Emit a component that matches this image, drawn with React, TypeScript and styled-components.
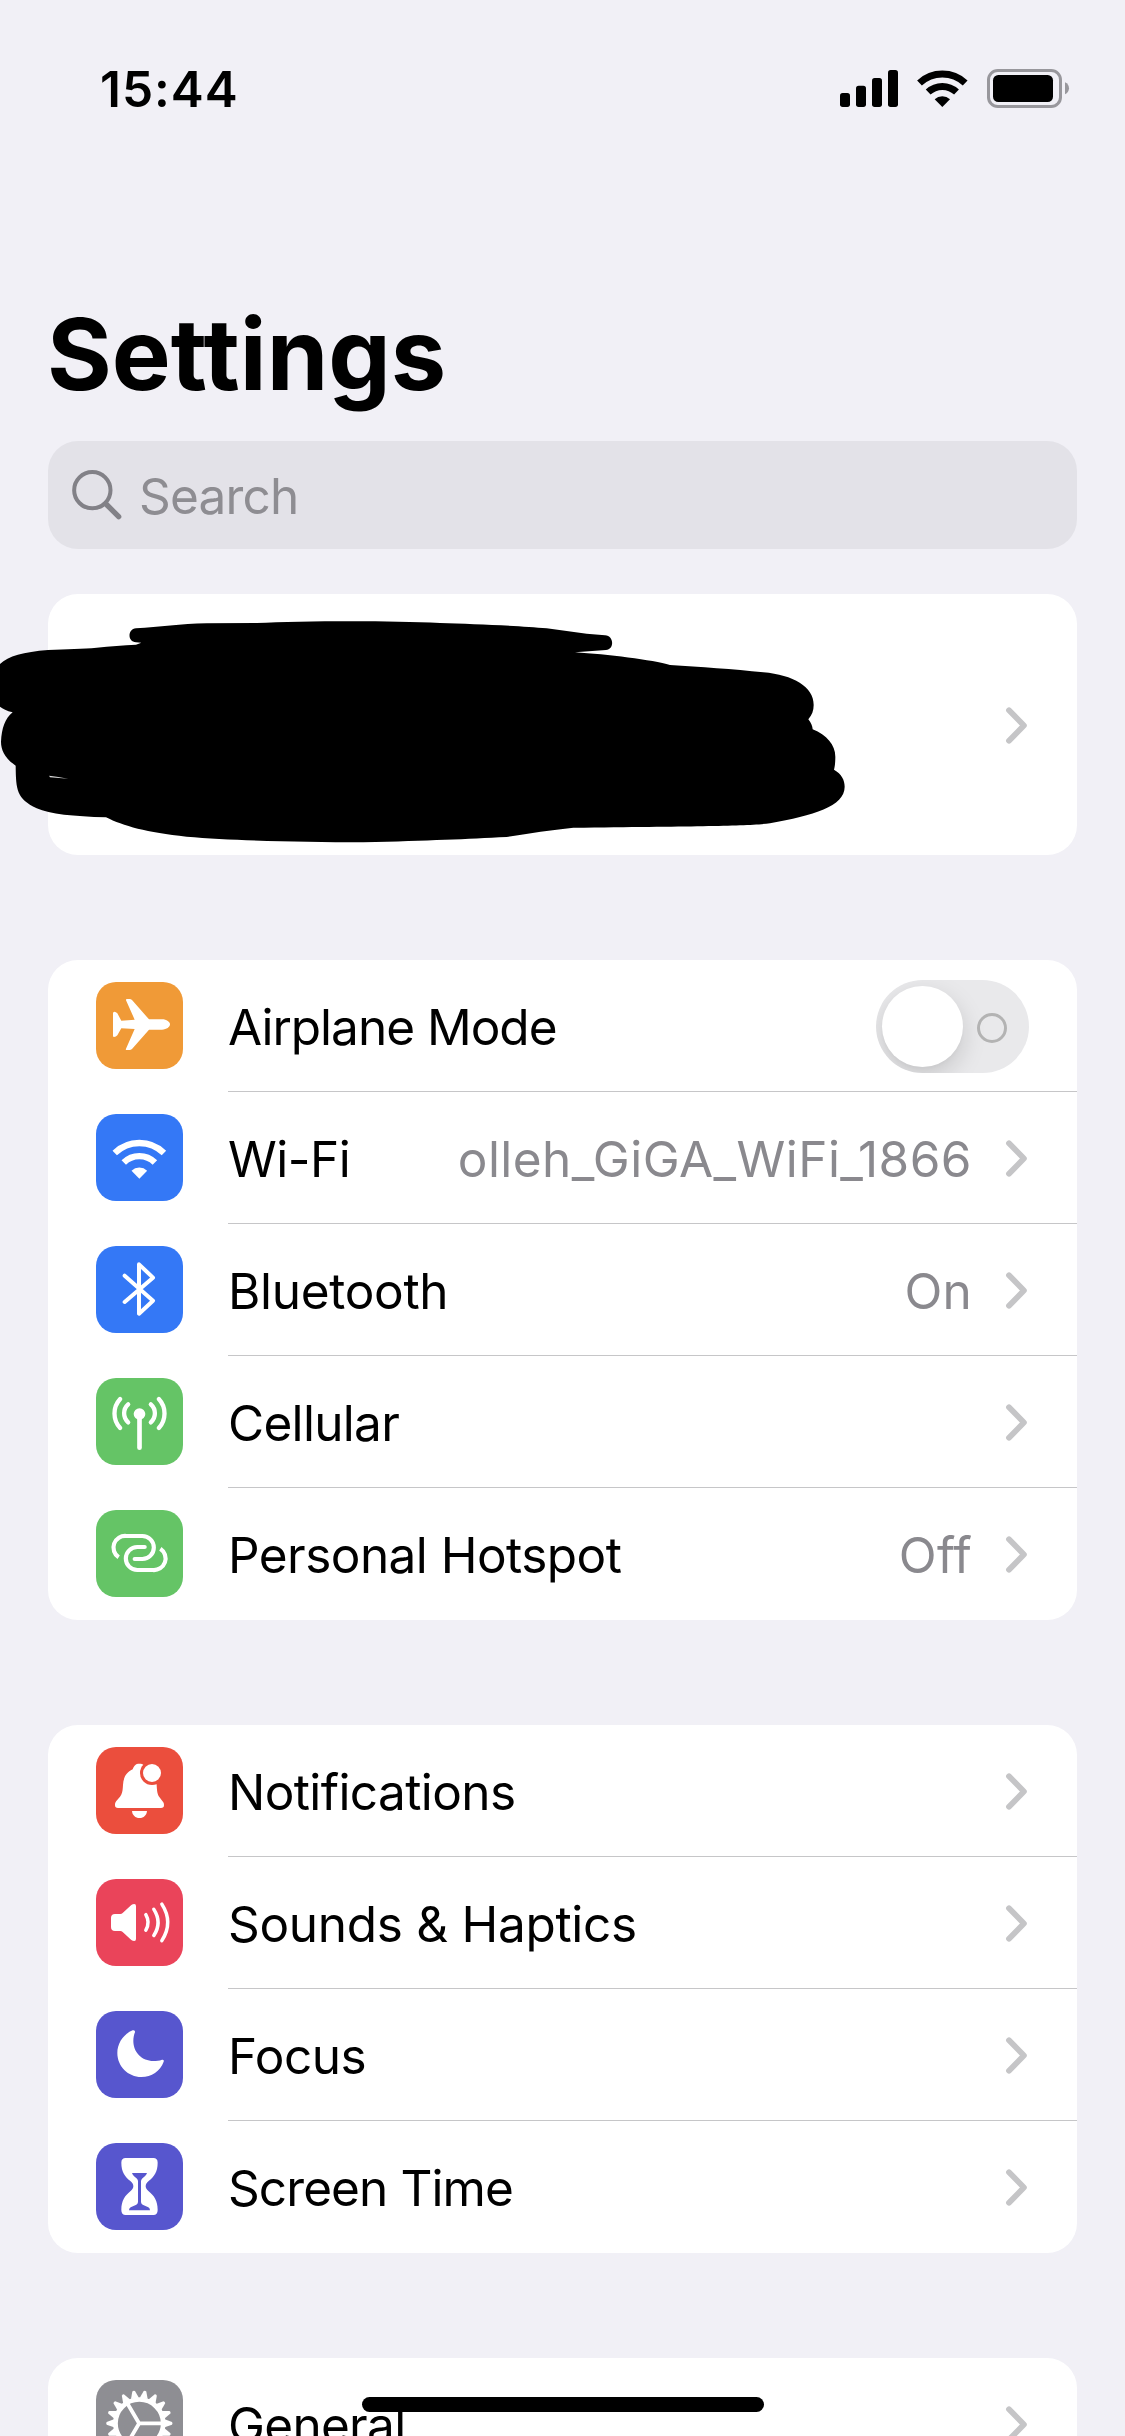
import React from "react";
import styled, { createGlobalStyle } from "styled-components";

const GlobalStyle = createGlobalStyle`
  * { box-sizing: border-box; }
  body { margin: 0; background: #f1f0f6; }
`;

const Screen = styled.div`
  position: relative;
  width: 1125px;
  height: 2436px;
  overflow: hidden;
  background: #f1f0f6;
  color: #000;
  font-family: Inter, "Liberation Sans", sans-serif;
  font-size: 49.5px;
`;

const StatusBar = styled.header`
  display: flex;
  justify-content: space-between;
  height: 132px;
  padding: 59px 55px 0 100px;
`;

const Clock = styled.div<{ $tracking: number }>`
  height: 60px;
  line-height: 60px;
  font-weight: 600;
  letter-spacing: ${(p) => p.$tracking}px;
`;

const StatusIcons = styled.div`
  display: flex;
  align-items: flex-start;
  padding-top: 10px;
  svg { display: block; }
`;

const SignalIcon = styled.svg`
  width: 58px;
  height: 37px;
  margin: 1px 19px 0 0;
`;

const StatusWifiIcon = styled.svg`
  width: 51px;
  height: 38px;
  margin: 0 19px 0 0;
`;

const BatteryIcon = styled.svg`
  width: 83px;
  height: 39px;
`;

const Main = styled.main`
  display: flex;
  flex-direction: column;
  padding: 162px 48px 0;
`;

const Title = styled.h1<{ $tracking: number }>`
  margin: 0 0 27px -1px;
  font-size: 99px;
  line-height: 120px;
  font-weight: 700;
  letter-spacing: ${(p) => p.$tracking}px;
`;

const SearchField = styled.div<{ $tracking: number }>`
  display: flex;
  align-items: center;
  height: 108px;
  padding: 2px 24px 0;
  border-radius: 30px;
  background: #e3e2e8;
  color: #8e8d92;
  letter-spacing: ${(p) => p.$tracking}px;
  svg { width: 50px; height: 50px; margin-right: 17px; margin-top: -3px; }
`;

const Card = styled.section<{ $top: number }>`
  margin-top: ${(p) => p.$top}px;
  border-radius: 30px;
  background: #fff;
`;

const ProfileCard = styled(Card)`
  position: relative;
  display: flex;
  align-items: center;
  justify-content: flex-end;
  height: 261px;
  padding-right: 50px;
`;

const Scribble = styled.svg`
  position: absolute;
  left: -48px;
  top: -4px;
  width: 870px;
  height: 270px;
`;

const Row = styled.div`
  display: flex;
  height: 132px;
  padding-left: 48px;
`;

const Tile = styled.div<{ $color: string }>`
  flex: none;
  width: 87px;
  height: 87px;
  margin: 22px 45px 0 0;
  border-radius: 20px;
  background: ${(p) => p.$color};
  overflow: hidden;
  svg { display: block; width: 87px; height: 87px; }
`;

const RowBody = styled.div<{ $last: boolean }>`
  display: flex;
  flex: 1;
  align-items: center;
  padding-right: 50px;
  border-bottom: 1px solid ${(p) => (p.$last ? "transparent" : "#c6c6c8")};
`;

const Label = styled.span<{ $tracking: number }>`
  flex: 1;
  padding-top: 3px;
  line-height: 60px;
  white-space: nowrap;
  letter-spacing: ${(p) => p.$tracking}px;
`;

const Value = styled(Label)`
  flex: none;
  margin-right: 33px;
  color: #8a898e;
`;

const ChevronIcon = styled.svg`
  flex: none;
  width: 22px;
  height: 37px;
  margin-top: 1px;
`;

const Switch = styled.div`
  display: flex;
  align-items: center;
  justify-content: space-between;
  width: 153px;
  height: 93px;
  margin: 1px -2px 0 0;
  padding: 0 22px 0 6px;
  border-radius: 47px;
  background: #e9e9eb;
  overflow: hidden;
`;

const Knob = styled.div`
  width: 81px;
  height: 81px;
  border-radius: 50%;
  background: #fff;
  box-shadow: 0 9px 24px rgba(0, 0, 0, 0.15), 0 3px 3px rgba(0, 0, 0, 0.02);
`;

const OffRing = styled.div`
  width: 30px;
  height: 30px;
  margin-top: 3px;
  border: 3px solid #b3b3b3;
  border-radius: 50%;
`;

const HomeIndicator = styled.div`
  position: absolute;
  left: 362px;
  top: 2397px;
  width: 402px;
  height: 15px;
  border-radius: 8px;
  background: #000;
`;

const Chevron = () => (
  <ChevronIcon viewBox="0 0 22 37" fill="none" stroke="#c5c5c7" strokeWidth="5.8" strokeLinecap="round" strokeLinejoin="round">
    <path d="M4 3.3 L18.9 18.5 L4 33.7" />
  </ChevronIcon>
);

const AirplaneGlyph = () => (
  <svg viewBox="48 66 261 261" fill="#fff">
    <path d="M207 178 H246 C260 178 270 186 270 193 C270 201 260 209 246 209 H207 L156 267 Q153 270 148 270 H140 Q136 270 138 266 L164 207 L124 205 L112 226 Q108 231 102 231 Q99 231 99 227 V160 Q99 155 103 155 Q108 155 112 160 L124 182 L164 179 L138 121 Q137 117 141 117 H149 Q153 117 156 120 Z" />
  </svg>
);

const WifiGlyph = () => (
  <svg viewBox="48 462 261 261" fill="none" stroke="#fff" strokeWidth="19">
    <path d="M104.2 579.2 A105.5 105.5 0 0 1 251.8 579.2" />
    <path d="M131.3 607.5 A66 66 0 0 1 224.7 607.5" />
    <path d="M178 656 L154.5 632 A34.5 34.5 0 0 1 201.5 632 Z" fill="#fff" stroke="none" />
  </svg>
);

const BluetoothGlyph = () => (
  <svg viewBox="48 78 261 261" fill="none" stroke="#fff" strokeWidth="12" strokeLinecap="round" strokeLinejoin="round">
    <path d="M134 167 L219 242 L177 281 V133 L219 173 L134 246" />
  </svg>
);

const CellularGlyph = () => (
  <svg viewBox="48 474 261 261" fill="none" stroke="#fff" strokeWidth="13" strokeLinecap="round">
    <circle cx="178.5" cy="582" r="17.5" fill="#fff" stroke="none" />
    <path d="M178.5 582 V683" strokeWidth="14" />
    <path d="M144.5 553 A36 36 0 0 0 144.5 607" />
    <path d="M212.5 553 A36 36 0 0 1 212.5 607" />
    <path d="M120.5 537 A64 64 0 0 0 120.5 624" />
    <path d="M236.5 537 A64 64 0 0 1 236.5 624" />
  </svg>
);

const HotspotGlyph = () => (
  <svg viewBox="48 870 261 261" fill="none" stroke="#fff" strokeWidth="12.5">
    <path d="M116 1012 A35 35 0 0 1 139 948 H187 A34.5 34.5 0 0 1 187 1017 H164" />
    <path d="M241 986 A35 35 0 0 1 218 1050 H172 A34.5 34.5 0 0 1 172 981 H194" />
    <path d="M164 1017 H164.1 M194 981 H194.1" strokeLinecap="round" />
  </svg>
);

const BellGlyph = () => (
  <svg viewBox="48 81 261 261" fill="#fff">
    <mask id="badgeGap" maskUnits="userSpaceOnUse" x="48" y="81" width="261" height="261">
      <rect x="48" y="81" width="261" height="261" fill="#fff" />
      <circle cx="216" cy="159" r="36" fill="#000" />
    </mask>
    <path
      mask="url(#badgeGap)"
      d="M178 131 C167 131 162 137 158 148 C138 157 130 174 129 195 C128 215 126 222 120 230 L109 243 C105 248 105 251 105 256 Q105 264 114 264 H243 Q252 264 252 256 C252 251 252 248 247 243 L238 231 C232 222 231 214 230 195 C229 172 215 157 199 148 C195 137 190 131 178 131 Z"
    />
    <circle cx="216" cy="159" r="27" />
    <path d="M156 273 H201 C200 286 191 294 178.5 294 C166 294 157 286 156 273 Z" />
  </svg>
);

const SoundGlyph = () => (
  <svg viewBox="48 477 261 261" fill="none" stroke="#fff" strokeWidth="10.5" strokeLinecap="round">
    <path
      fill="#fff"
      stroke="none"
      d="M105 582 H121 Q125 582 128 579 L154 555 Q158 552 163 552 Q168 552 168 558 V657 Q168 663 163 663 Q158 663 154 660 L128 636 Q125 633 121 633 H105 Q93 633 93 621 V594 Q93 582 105 582 Z"
    />
    <path d="M197.5 584 Q211 607.5 197.5 630.5" />
    <path d="M221.5 568 Q247 607.5 221.5 646.5" />
    <path d="M245.5 552.5 Q281 607.5 245.5 662" />
  </svg>
);

const MoonGlyph = () => (
  <svg viewBox="48 63 261 261" fill="#fff">
    <path d="M158 121 C131 132 112 159 112 189 C112 229 144 261 184 261 C215 261 240 244 251 215 Q253 208 246 209 C238 212 230 213 220 213 C186 213 160 187 160 153 C160 143 162 134 165 127 Q166 119 158 121 Z" />
  </svg>
);

const HourglassGlyph = () => (
  <svg viewBox="48 459 261 261" fill="#fff" fillRule="evenodd">
    <path d="M137 504 H220 Q233 504 233 518 C233 546 222 560 206 573 C194 583 194 594 206 604 C222 617 233 632 233 660 Q233 675 220 675 H137 Q124 675 124 660 C124 632 135 617 151 604 C163 594 163 583 151 573 C135 560 124 546 124 518 Q124 504 137 504 Z M156 549 C158 557 166 562 171 566 Q174 569 174 574 V636 Q174 641 169 644 L152 652 Q147 655 147 661 H210 Q210 655 205 652 L188 644 Q183 641 183 636 V574 Q183 569 186 566 C191 562 199 557 201 549 Z" />
  </svg>
);

const TEETH = Array.from({ length: 18 }, (_, i) => i * 20);

const GearGlyph = () => (
  <svg viewBox="168 120 261 261" fill="none" stroke="#fff">
    {TEETH.map((angle) => (
      <path key={angle} d="M374 238 L396 246 Q399 250 396 254 L374 262 Z" fill="#fff" stroke="none" transform={`rotate(${angle} 298 250)`} />
    ))}
    <circle cx="298" cy="250" r="71.5" strokeWidth="14" />
    <path d="M296 250 H366 M298 251 L261 188 M298 249 L261 312" strokeWidth="11.5" />
  </svg>
);

type Item = {
  label: string;
  tracking: number;
  color: string;
  glyph: React.ReactNode;
  value?: string;
  valueTracking?: number;
  toggle?: boolean;
};

const GROUPS: { top: number; items: Item[] }[] = [
  {
    top: 105,
    items: [
      { label: "Airplane Mode", tracking: -1, color: "#f09a37", glyph: <AirplaneGlyph />, toggle: true },
      { label: "Wi-Fi", tracking: -0.5, color: "#3478f6", glyph: <WifiGlyph />, value: "olleh_GiGA_WiFi_1866", valueTracking: 0.45 },
      { label: "Bluetooth", tracking: -0.3, color: "#3478f6", glyph: <BluetoothGlyph />, value: "On", valueTracking: 0.2 },
      { label: "Cellular", tracking: -0.7, color: "#65c466", glyph: <CellularGlyph /> },
      { label: "Personal Hotspot", tracking: -0.55, color: "#65c466", glyph: <HotspotGlyph />, value: "Off", valueTracking: 0.2 },
    ],
  },
  {
    top: 105,
    items: [
      { label: "Notifications", tracking: -0.6, color: "#eb4e3d", glyph: <BellGlyph /> },
      { label: "Sounds & Haptics", tracking: -0.3, color: "#ea445a", glyph: <SoundGlyph /> },
      { label: "Focus", tracking: -0.5, color: "#5756ce", glyph: <MoonGlyph /> },
      { label: "Screen Time", tracking: -0.9, color: "#5756ce", glyph: <HourglassGlyph /> },
    ],
  },
  {
    top: 105,
    items: [{ label: "General", tracking: -0.7, color: "#8e8e93", glyph: <GearGlyph /> }],
  },
];

const SettingsRow = ({ item, last }: { item: Item; last: boolean }) => (
  <Row>
    <Tile $color={item.color}>{item.glyph}</Tile>
    <RowBody $last={last}>
      <Label $tracking={item.tracking}>{item.label}</Label>
      {item.value && <Value $tracking={item.valueTracking ?? 0}>{item.value}</Value>}
      {item.toggle ? (
        <Switch>
          <Knob />
          <OffRing />
        </Switch>
      ) : (
        <Chevron />
      )}
    </RowBody>
  </Row>
);

export default function App() {
  return (
    <Screen>
      <GlobalStyle />
      <StatusBar>
        <Clock $tracking={1}>15:44</Clock>
        <StatusIcons>
          <SignalIcon viewBox="60 60 174 111">
            <rect x="60" y="129" width="30" height="42" rx="8" />
            <rect x="108" y="107" width="30" height="64" rx="8" />
            <rect x="156" y="84" width="30" height="87" rx="8" />
            <rect x="204" y="60" width="30" height="111" rx="8" />
          </SignalIcon>
          <StatusWifiIcon viewBox="291 57 153 114" fill="none" stroke="#000" strokeWidth="21">
            <path d="M298.5 99 A100.5 100.5 0 0 1 435.5 99" />
            <path d="M324.5 126 A62 62 0 0 1 409.5 126" />
            <path d="M367 171 L344 147.5 A34 34 0 0 1 390 147.5 Z" fill="#000" stroke="none" />
          </StatusWifiIcon>
          <BatteryIcon viewBox="501 57 249 117">
            <rect x="505.5" y="61.5" width="216" height="108" rx="28" fill="none" stroke="#98979c" strokeWidth="9" />
            <rect x="519" y="75" width="180" height="81" rx="16" />
            <path d="M735 97 C751 104 751 126 735 133 Z" fill="#98979c" />
          </BatteryIcon>
        </StatusIcons>
      </StatusBar>
      <Main>
        <Title $tracking={0}>Settings</Title>
        <SearchField $tracking={-0.8}>
          <svg viewBox="95 542 150 150" fill="none" stroke="#828187" strokeLinecap="round">
            <circle cx="156" cy="602.5" r="54.5" strokeWidth="12" />
            <path d="M197 644 L235 682" strokeWidth="16" />
          </svg>
          Search
        </SearchField>
        <ProfileCard $top={45}>
          <Chevron />
          <Scribble viewBox="0 0 2610 810">
            <path d="M-10 230 L0 222 C25 198 70 186 144 180 C200 177 250 177 290 173 C330 169 370 165 408 164 L424 158 L408 157 C382 155 382 118 408 115 C480 111 540 101 620 100 L770 99 C900 93 1160 91 1320 99 C1420 102 1560 107 1640 115 L1760 131 L1815 136 C1843 138 1843 178 1818 180 L1725 187 C1820 193 1960 210 2010 225 C2100 231 2200 237 2290 247 C2380 255 2441 290 2441 345 C2441 362 2436 375 2425 388 C2434 400 2437 408 2438 418 C2480 435 2506 465 2506 500 C2506 520 2504 532 2502 539 C2525 552 2534 570 2534 590 C2534 650 2440 675 2310 700 C2240 708 2100 709 1720 713 C1650 720 1590 730 1520 741 C1400 747 1290 752 1090 757 C900 756 700 752 560 740 C440 728 370 708 318 682 C220 680 150 672 110 655 C50 625 48 600 47 527 C15 505 3 480 3 455 C5 415 15 385 38 367 C20 363 8 356 0 350 L-10 345 Z" />
            <path d="M147 557 L170 560 L205 566 L150 562 Z" fill="#ddd" />
          </Scribble>
        </ProfileCard>
        {GROUPS.map((group, g) => (
          <Card key={g} $top={group.top}>
            {group.items.map((item, i) => (
              <SettingsRow key={item.label} item={item} last={i === group.items.length - 1} />
            ))}
          </Card>
        ))}
      </Main>
      <HomeIndicator />
    </Screen>
  );
}
